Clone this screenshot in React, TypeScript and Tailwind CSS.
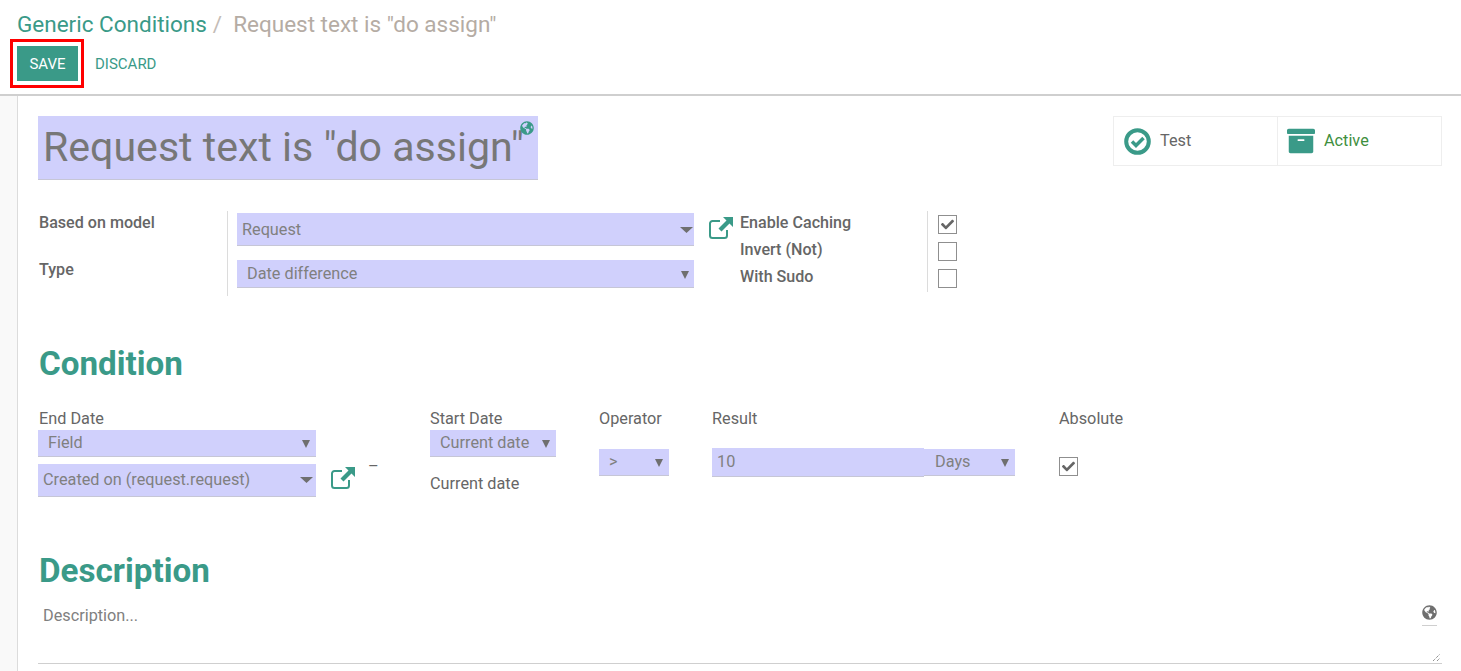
import { FaArchive, FaCheck, FaGlobeAmericas } from 'react-icons/fa'

const LAVENDER = 'bg-[#d0d0fc] border-b border-[#c6c6d6]'

function Caret({ wide = false }: { wide?: boolean }) {
  return (
    <svg width={wide ? 13 : 8} height={wide ? 6 : 9} viewBox={wide ? '0 0 13 6' : '0 0 8 9'} className="shrink-0">
      <path d={wide ? 'M0 0h13L6.5 6z' : 'M0 1h8L4 9z'} fill="#6f6f6f" />
    </svg>
  )
}

function Select({ label, className, pad = 'pl-[10px]', wide = false }: { label: string; className: string; pad?: string; wide?: boolean }) {
  return (
    <div className={`flex items-center justify-between text-[#808080] ${LAVENDER} ${pad} ${className}`}>
      <span className="whitespace-nowrap">{label}</span>
      <Caret wide={wide} />
    </div>
  )
}

function ExternalLink() {
  return (
    <svg width="26" height="24" viewBox="0 0 26 24" fill="none">
      <path d="M12 5H4.5A2.5 2.5 0 0 0 2 7.500V19.500A2.500 2.500 0 0 0 4.500 22H16.500A2.500 2.500 0 0 0 19 19.500V14" stroke="#3a9a88" strokeWidth="2" />
      <path d="M15 1H25V11L21.500 7.500L13.500 15.500L10.500 12.500L18.500 4.500Z" fill="#3a9a88" />
    </svg>
  )
}

function CheckCircle() {
  return (
    <svg width="27" height="27" viewBox="0 0 27 27" fill="none">
      <circle cx="13.500" cy="13.500" r="11.300" stroke="#3a9a88" strokeWidth="4" />
      <path d="M8 13.500L12 17.500L19.500 10" stroke="#3a9a88" strokeWidth="3.500" />
    </svg>
  )
}

function Checkbox({ checked = false }: { checked?: boolean }) {
  return (
    <div className="flex h-[19px] w-[19px] items-center justify-center border border-[#8f8f8f] bg-white">
      {checked && <FaCheck className="text-[13px] text-[#666666]" />}
    </div>
  )
}

export default function App() {
  return (
    <div className="flex h-[671px] w-full flex-col overflow-hidden bg-white font-['Roboto',sans-serif] text-[16.25px] text-[#666666]">
      <header className="h-[96px] shrink-0 border-b-2 border-[#cfcfcf] pl-[10px]">
        <div className="flex h-[39px] items-center pl-[7px] pt-[10px] text-[22.5px] leading-none">
          <span className="text-[#3a9a88]">Generic Conditions</span>
          <span className="ml-[6px] text-[#c4bcb6]">/</span>
          <span className="ml-[11px] text-[#b5aca4]">Request text is "do assign"</span>
        </div>
        <div className="flex items-center">
          <div className="border-[3px] border-[#ff0000] py-[4px] pl-[4px] pr-[3px]">
            <button className="flex h-[35px] w-[61px] items-center justify-center bg-[#3a9a88] pt-[1px] text-[15px] text-white">SAVE</button>
          </div>
          <button className="ml-[11px] pt-[1px] text-[15px] text-[#3a9a88]">DISCARD</button>
        </div>
      </header>

      <div className="flex min-h-0 flex-1">
        <div className="w-[18px] shrink-0 border-r border-[#dcdcdc] bg-[#f9f9f9]" />
        <main className="min-w-0 flex-1 pl-[20px] pr-[19px]">
          <div className="flex items-start justify-between pt-[20px]">
            <div className={`relative flex h-[64px] w-[500px] items-center pl-[5px] text-[41.1px] text-[#777777] ${LAVENDER}`}>
              <span className="whitespace-nowrap">Request text is "do assign"</span>
              <FaGlobeAmericas className="absolute left-[482px] top-[5px] text-[14px] text-[#3a9a88]" />
            </div>
            <div className="flex h-[50px] w-[329px] border border-[#eeeeee]">
              <div className="flex w-[164px] items-center gap-[9px] border-r border-[#eeeeee] pl-[10px]">
                <CheckCircle />
                <span>Test</span>
              </div>
              <div className="flex flex-1 items-center gap-[9px] pl-[9px]">
                <FaArchive className="text-[28px] text-[#3a9a88]" />
                <span className="text-[#3f8f3f]">Active</span>
              </div>
            </div>
          </div>

          <div className="mt-[29px] flex items-start">
            <div className="mt-[3px] w-[189px] shrink-0 pl-[1px] text-[16.1px] font-medium">
              <div className="h-[47px] leading-[22px]">Based on model</div>
              <div className="leading-[22px]">Type</div>
            </div>
            <div className="mt-[2px] flex h-[85px] shrink-0 flex-col border-l border-[#dcdcdc] pl-[9px] pt-[2px]">
              <Select label="Request" className="h-[33px] w-[457px] pr-[1px] pt-[2px]" pad="pl-[5px]" wide />
              <Select label="Date difference" className="mt-[14px] h-[28px] w-[457px] pr-[5px] pt-[2px]" />
            </div>
            <div className="ml-[14px] mt-[7px] w-[26px] shrink-0">
              <ExternalLink />
            </div>
            <div className="ml-[6px] w-[187px] shrink-0 text-[16.1px] font-medium leading-[27px]">
              <div>Enable Caching</div>
              <div>Invert (Not)</div>
              <div>With Sudo</div>
            </div>
            <div className="mt-[2px] flex h-[81px] flex-col gap-[8px] border-l border-[#dcdcdc] pl-[10px] pt-[4px]">
              <Checkbox checked />
              <Checkbox />
              <Checkbox />
            </div>
          </div>

          <h2 className="mt-[46px] pl-[1px] text-[33.2px] font-bold leading-[44px] text-[#3a9a88]">Condition</h2>

          <div className="mt-[21px] flex items-start">
            <div className="w-[278px] shrink-0">
              <div className="pl-[1px] leading-[23px]">End Date</div>
              <Select label="Field" className="h-[27px] w-full pr-[6px]" />
              <Select label="Created on (request.request)" className="mt-[7px] h-[33px] w-full pr-[3px]" pad="pl-[5px]" wide />
            </div>
            <div className="ml-[14px] mt-[59px] w-[26px] shrink-0">
              <ExternalLink />
            </div>
            <div className="ml-[12px] mt-[52px] w-[62px] shrink-0 leading-none">–</div>
            <div className="w-[126px] shrink-0">
              <div className="leading-[23px]">Start Date</div>
              <Select label="Current date" className="h-[27px] w-full pr-[6px]" />
              <div className="mt-[15px] leading-[24px]">Current date</div>
            </div>
            <div className="ml-[43px] w-[70px] shrink-0">
              <div className="leading-[23px]">Operator</div>
              <Select label=">" className="mt-[19px] h-[27px] w-full pr-[6px]" />
            </div>
            <div className="ml-[43px] w-[303px] shrink-0">
              <div className="leading-[23px]">Result</div>
              <div className="mt-[18px] flex items-start">
                <div className={`flex h-[29px] w-[212px] items-center pl-[5px] text-[#808080] ${LAVENDER}`}>10</div>
                <Select label="Days" className="mt-[1px] h-[27px] flex-1 pr-[6px]" pad="pl-[11px]" />
              </div>
            </div>
            <div className="ml-[44px] shrink-0">
              <div className="leading-[23px]">Absolute</div>
              <div className="mt-[27px]">
                <Checkbox checked />
              </div>
            </div>
          </div>

          <h2 className="mt-[52px] pl-[1px] text-[33.2px] font-bold leading-[44px] text-[#3a9a88]">Description</h2>

          <div className="relative mt-[11px] h-[60px] border-b border-[#cfcfcf] pl-[5px] text-[#808080]">
            <div className="leading-[24px]">Description...</div>
            <div className="absolute right-[5px] top-[1px] w-[15px] border-b border-[#cfcfcf] pb-[5px]">
              <FaGlobeAmericas className="text-[15px] text-[#6f6f6f]" />
            </div>
            <svg width="7" height="7" viewBox="0 0 7 7" className="absolute bottom-[2px] right-[2px]">
              <path d="M0 7L7 0M4 7L7 4" stroke="#666666" strokeWidth="1" strokeDasharray="1 1" />
            </svg>
          </div>
        </main>
      </div>
    </div>
  )
}
